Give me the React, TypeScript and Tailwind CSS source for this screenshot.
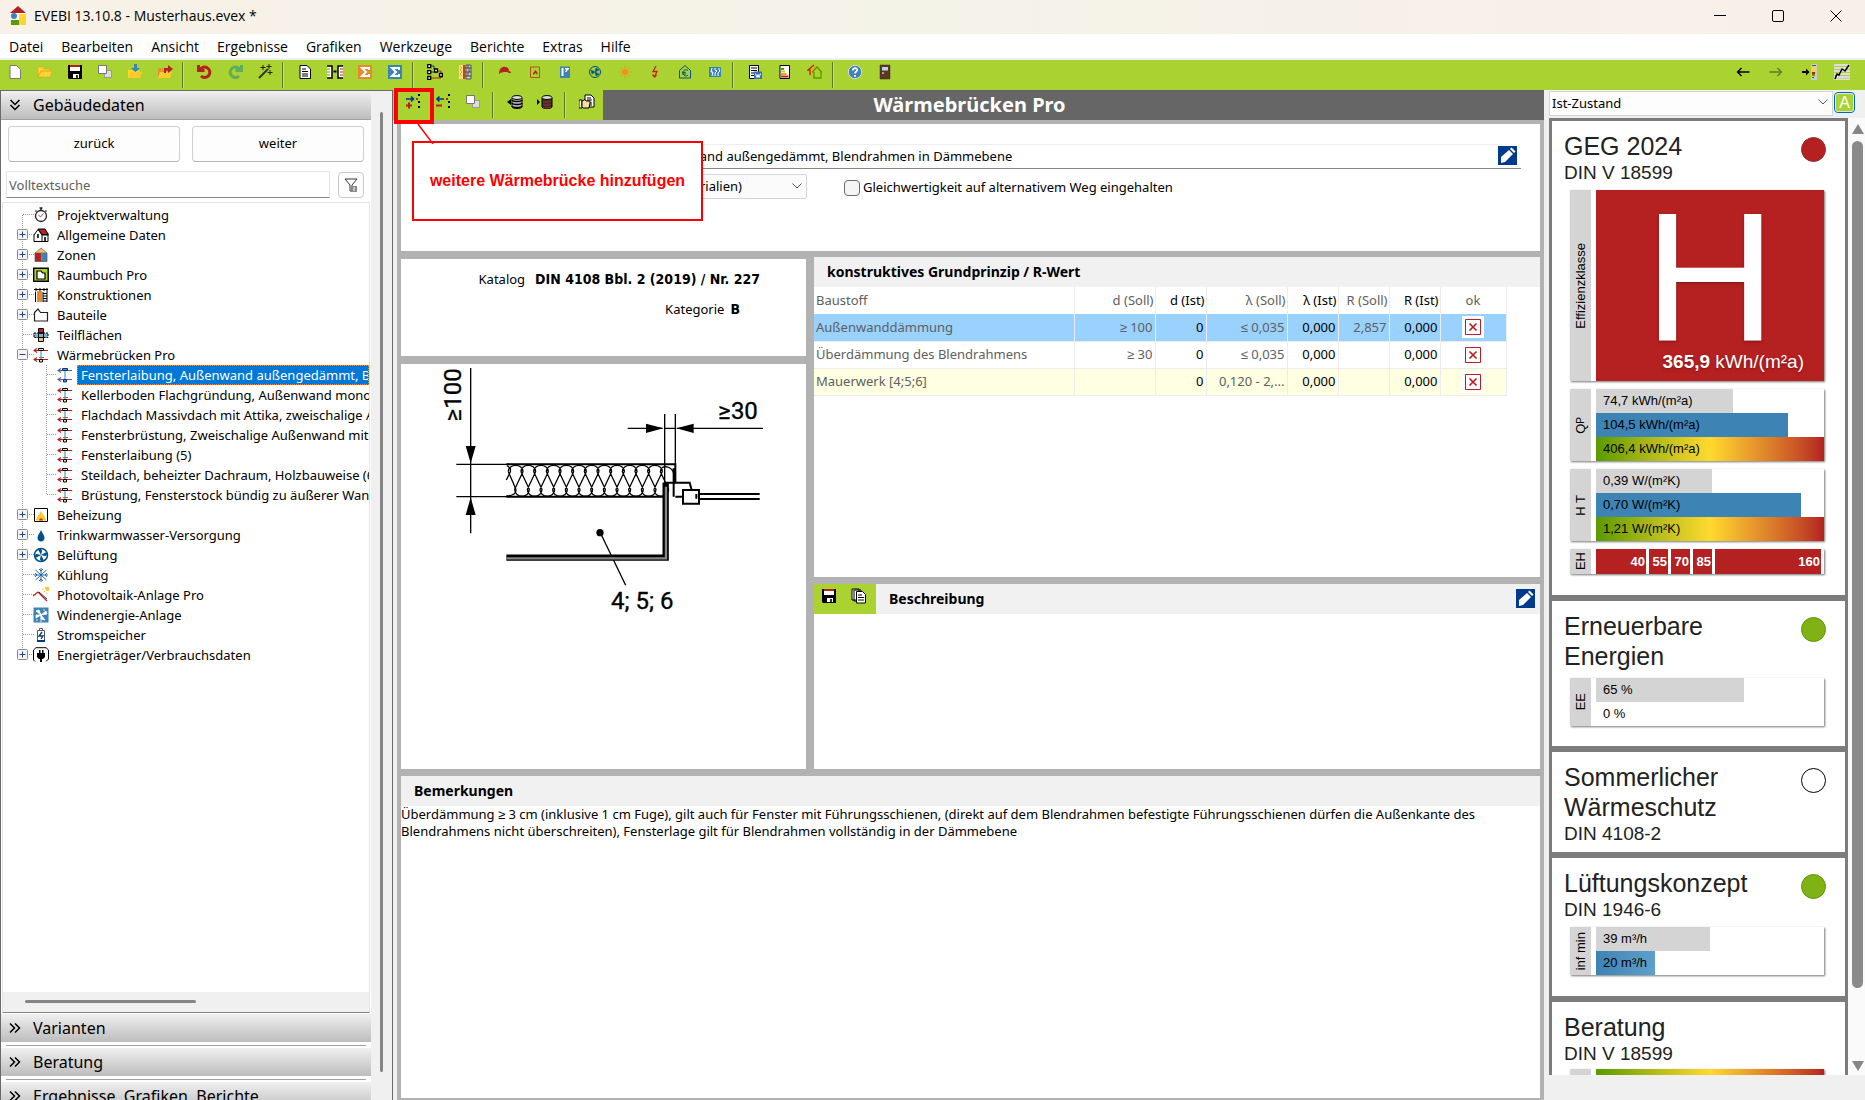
import React from "react";

/* ---------- icons (16 x 16 grid) ---------- */

const icons: Record<string, React.ReactNode> = {
  file: <path d="M3 1.500h6.500l4 4v9H3z" fill="#fff" stroke="#777" />,
  folder: <path d="M1 3h5l1 2h6v2H4l-3 6zM4 7h11l-2 6H1z" fill="#ffd530" stroke="#e0962e" strokeWidth=".5" />,
  save: (
    <>
      <path d="M1 1h14v14H2l-1-1z" fill="#000" />
      <path d="M3 1h10v2H3z" fill="#b52020" />
      <path d="M3 3h10v4H3zM6 10h6v4H6z" fill="#fff" />
      <path d="M9 11h2v3H9z" fill="#333" />
    </>
  ),
  copy: (
    <>
      <path d="M7.500 6.500h7v7h-7z" fill="#ddd" stroke="#999" />
      <path d="M1.500 1.500h8v8h-8z" fill="#fff" stroke="#777" />
    </>
  ),
  open: (
    <>
      <path d="M1 6h4l1 1h7v2l-2 5H1z" fill="#ffd530" />
      <path d="M3 8h12l-2 6H1z" fill="#ffcb2c" />
      <path d="M7 0h3v4h3L8.500 8 4 4h3z" fill="#3d83b4" />
    </>
  ),
  export: (
    <>
      <path d="M1 4h5l1 2h6v3l-2 5H1z" fill="#e0962e" />
      <path d="M3 8h12l-2 6H1z" fill="#ffcb2c" />
      <path d="M7 4h4V1l5 4-5 4V6.500H9V9H7z" fill="#b52020" />
    </>
  ),
  undo: <path d="M3 6a5.200 5.200 0 1 1 1 6M1.500 1v5.500h6" fill="none" stroke="#b52020" strokeWidth="3" />,
  redo: <path d="M13 6a5.200 5.200 0 1 0-1 6M14.500 1v5.500h-6" fill="none" stroke="#5eac5d" strokeWidth="3" />,
  wand: (
    <>
      <path d="M2 14 11 5" stroke="#333" strokeWidth="2" />
      <path d="M6 1v5M3.500 3.500h5M12 0v5M9.500 2.500h5M13 6v5M10.500 8.500h5" stroke="#222" />
    </>
  ),
  doc: (
    <>
      <path d="M3 1.500h7l3.500 3.500v9.500H3z" fill="#fff" stroke="#000" />
      <path d="M5 5h4M5 7.500h6M5 10h6M5 12h6" stroke="#000" />
    </>
  ),
  compare: (
    <>
      <path d="M0 2h5v12H0M16 2h-5v12h5" fill="#fff" stroke="#000" strokeWidth="1.500" />
      <path d="M0 5h3M0 8h3M0 11h3" stroke="#5a9a00" />
      <path d="M13 5h3M13 8h3M13 11h3" stroke="#b52020" />
      <path d="M6.500 7.500h3" stroke="#000" strokeWidth="2" />
    </>
  ),
  sumOrange: (
    <>
      <path d="M1 1h14v14H1z" fill="#e68a2e" />
      <path d="M12 6V4H5l4 4-4 4h7v-2" fill="none" stroke="#fff" strokeWidth="2" />
    </>
  ),
  sumBlue: (
    <>
      <path d="M1 1h14v14H1z" fill="#3d83b4" />
      <path d="M12 6V4H5l4 4-4 4h7v-2" fill="none" stroke="#fff" strokeWidth="2" />
    </>
  ),
  tree: (
    <>
      <path d="M3 2h4v3l3 1M3 8h7" fill="none" stroke="#003a8c" />
      <path d="M4 14h10v-3M10 7h4v3" fill="none" stroke="#b52020" />
      <path d="M.7.700h3v3h-3zM.7 6.700h3v3h-3zM.7 12.500h3v3h-3zM7.500 5h3v3h-3zM12.500 9.500h3v3h-3z" fill="#fff" stroke="#000" strokeWidth="1.300" />
    </>
  ),
  wall: (
    <>
      <path d="M2 1h4v14H2z" fill="#ffd98a" />
      <path d="M7 1v14" stroke="#b52020" strokeWidth="1.500" />
      <path d="M9 1h5v14H9z" fill="#ccc" stroke="#555" />
      <path d="M8 4h6M8 8h6M8 12h6M11 1v3M12 4v4M11 8v4" stroke="#444" />
      <path d="m3 2 2 2-2 2 2 2-2 2 2 2" fill="none" stroke="#c90" strokeWidth=".7" />
    </>
  ),
  cap: <path d="M2 10c0-5 3-8 6-7 3 0 4 2 4 4l2 1c0 2-2 1-4 0-3 0-6 0-8 2z" fill="#b52020" />,
  flame: (
    <>
      <path d="M3.500 3h9v10.500h-9z" fill="none" stroke="#b5521a" />
      <path d="M6 11c-.5-3 2-3 2-5 3 2 3 4 2 5 0-1.500-1-1.500-2-2 0 1-1 1-2 2" fill="#b52020" />
    </>
  ),
  tap: (
    <>
      <path d="M3 2.500h10V14H3z" fill="#3d83b4" />
      <path d="M4.500 4h2v8h-2zM8 4h4v1.500h-1L9.500 8H8l1.200-2.500H8z" fill="#fff" />
    </>
  ),
  fanSmall: (
    <>
      <circle cx="8" cy="8" r="5.500" fill="none" stroke="#00508f" />
      <path d="m8 8-4-2 1 4zM8 8l1-4 3 2zM8 8l4 2-3 2z" fill="#00508f" stroke="#00508f" strokeWidth=".5" />
    </>
  ),
  sun: (
    <>
      <circle cx="8" cy="8" r="3" fill="#ff8c1a" />
      <path d="M8 2v2M8 12v2M2 8h2M12 8h2M3.800 3.800l1.400 1.400M10.800 10.800l1.400 1.400M12.200 3.800l-1.400 1.400M5.200 10.800l-1.400 1.400" stroke="#ff8c1a" />
    </>
  ),
  bolt: <path d="M9 2 6 7.500h4L8 12M5.500 10.500 7.500 13l2-2" fill="none" stroke="#c81e1e" strokeWidth="1.300" />,
  houseEuro: (
    <>
      <path d="M2.500 6.500 8 1.500l5.500 5v7.500h-11z" fill="none" stroke="#00508f" />
      <path d="M11 6.500c-3-2-5 0-5 2.500s3 4 5 2M5 8.300h4M5 10h4" fill="none" stroke="#00508f" />
    </>
  ),
  meter: (
    <>
      <path d="M2 3h12v10H2z" fill="#3d83b4" />
      <path d="M5 4 4 8h2l-1 4M8 4v2l2 1-2 2v3M12 4v2l1 1-2 2v3" fill="none" stroke="#fff" />
    </>
  ),
  docWord: (
    <>
      <path d="M2.500 1.500h9v13h-9z" fill="#fff" stroke="#000" />
      <path d="M4 4h6M4 6.500h6M4 9h4M4 11.500h3" stroke="#000" />
      <path d="M7 7.500h8V15H7z" fill="#3d6fb4" />
      <path d="m8.500 9.500 1.500 4 1-3 1 3 1.500-4" fill="none" stroke="#fff" />
    </>
  ),
  energyDoc: (
    <>
      <path d="M3 1.500h9.500v13H3z" fill="#fff" stroke="#000" />
      <path d="M4 4h3v2H4z" fill="#5a9a00" />
      <path d="M4 6.500h4v2H4z" fill="#c6d420" />
      <path d="M4 9h5.500v2H4z" fill="#f0a020" />
      <path d="M4 11.500h7.500v2H4z" fill="#c81e1e" />
    </>
  ),
  houses: (
    <>
      <path d="M3 11V6H1l6-5" fill="none" stroke="#c81e1e" strokeWidth="1.300" />
      <path d="M5 13V6l5-4" fill="none" stroke="#f0a020" strokeWidth="1.300" />
      <path d="M5 8.500 10 3l5 5.500M7 8v6h7V8" fill="none" stroke="#5a9a00" strokeWidth="1.300" />
    </>
  ),
  help: (
    <>
      <circle cx="8" cy="8" r="6.700" fill="#3d83b4" stroke="#ddd" />
      <path d="M5.800 6.500c0-3 4.500-3 4.500-.5C10.300 7.500 8 7.500 8 9.500M8 11v1.700" fill="none" stroke="#fff" strokeWidth="1.700" />
    </>
  ),
  door: (
    <>
      <path d="M3 1h10v14H3z" fill="#5f3524" stroke="#333" strokeWidth=".5" />
      <path d="M5 3h6v3.500H5z" fill="#b5d6ee" />
      <path d="M5 9h2" stroke="#fff" />
    </>
  ),
  left: <path d="M14.500 8h-12M6.500 4l-4 4 4 4" fill="none" stroke="#000" strokeWidth="1.300" />,
  right: <path d="M1.500 8h12M9.500 4l4 4-4 4" fill="none" stroke="#5f7a2c" strokeWidth="1.300" />,
  dock: (
    <>
      <path d="M10 0h6v16h-6z" fill="#ccc" />
      <path d="M11 3h4v4h-4z" fill="#ffd530" />
      <path d="M11 8h3v2h-3z" fill="#b52020" />
      <path d="M11 10h3v2h-3z" fill="#5a9a00" />
      <path d="M11 1.500h4M11 13.500h2" stroke="#555" />
      <path d="M1 7h4V4.500L8.500 8 5 11.500V9H1z" fill="#000" />
    </>
  ),
  chart: (
    <>
      <path d="M0 1h16M0 4h16M0 7h16M0 10h16M0 13h16M0 15.500h16" stroke="#ddd" strokeWidth="1.800" />
      <path d="m1 15 2-5 2 1 3-6 3 2 4-6" fill="none" stroke="#000" strokeWidth="1.500" />
    </>
  ),
  addRow: (
    <>
      <path d="M1 5h7M6 2.500 8.500 5 6 7.500" fill="none" stroke="#003a8c" strokeWidth="1.700" />
      <path d="M1 11.500h6M4 8.500v6" stroke="#b52020" strokeWidth="2" />
      <path d="M11 4h2v2h-2z" fill="#b52020" />
      <path d="M13 0h2v2h-2zM13 7h2v2h-2zM13 12h2v2h-2z" fill="#000" />
    </>
  ),
  removeRow: (
    <>
      <path d="M9 5H2M4.500 2.500 2 5l2.500 2.500" fill="none" stroke="#003a8c" strokeWidth="1.700" />
      <path d="M1 11.500h6" stroke="#b52020" strokeWidth="2" />
      <path d="M11 4h2v2h-2z" fill="#b52020" />
      <path d="M13 0h2v2h-2zM13 7h2v2h-2zM13 12h2v2h-2z" fill="#000" />
    </>
  ),
  dbOut: (
    <>
      <path d="M5 4v9c1 2 9 2 10 0V4" fill="#bbb" stroke="#000" />
      <path d="M5 6c1 2 9 2 10 0M5 9c1 2 9 2 10 0M5 12c1 2 9 2 10 0" fill="none" stroke="#000" strokeWidth="1.500" />
      <ellipse cx="10" cy="3.500" rx="5" ry="2" fill="#ddd" stroke="#000" />
      <path d="M4 5v6L0 8z" fill="#000" />
    </>
  ),
  dbIn: (
    <>
      <path d="M5 4v9c1 2 9 2 10 0V4" fill="#333" stroke="#000" />
      <path d="M6 7c1 1.500 7 1.500 8 0M6 10c1 1.500 7 1.500 8 0M6 13c1 1.500 7 1.500 8 0" fill="none" stroke="#b52020" />
      <ellipse cx="10" cy="3.500" rx="5" ry="2" fill="#ddd" stroke="#000" />
      <path d="M0 5v6l3-3z" fill="#000" />
    </>
  ),
  hand: (
    <>
      <path d="M6 1h6l3 3v9H6z" fill="#fff" stroke="#000" />
      <path d="M8 4h4M8 6h5M11 9h2M11 11h2" stroke="#000" />
      <path d="M0 6h3v8H0z" fill="#fff" stroke="#000" />
      <path d="m3 7 3-1.500 1 1.500h4v2l-1 5H4l-1-1z" fill="#f5e0a0" stroke="#000" />
    </>
  ),
  pages: (
    <>
      <path d="M1 1h7v11H1zM3 2h7v11H3z" fill="#fff" stroke="#000" />
      <path d="M5.500 3.500h6l3 3v8.500h-9z" fill="#fff" stroke="#000" />
      <path d="M7 7h4M7 9.500h6M7 12h6" stroke="#000" />
    </>
  ),
  clock: (
    <>
      <circle cx="8" cy="9" r="5.500" fill="#fff" stroke="#222" strokeWidth="1.300" />
      <path d="M8 .5V3M6.500 1h3M2.500 3.500l1 1M13.500 3.500l-1 1" stroke="#222" strokeWidth="1.500" />
      <path d="m5.500 8 2 2 3-3.500" fill="none" stroke="#c84030" />
    </>
  ),
  house: (
    <>
      <path d="M1 8 5 2.500 9 8v6.500H1zM9 8h6v6.500H9" fill="#fff" stroke="#000" />
      <path d="M5 2h7l3.500 5.500H9z" fill="#b52020" stroke="#000" />
      <path d="M4 7h2v4H4zM11 10h2v4h-2z" fill="#334" />
    </>
  ),
  zones: (
    <>
      <path d="m2 6 6-5 6 5z" fill="#e6c470" stroke="#765" strokeWidth=".7" />
      <path d="M2 6h6.500v8.500H2z" fill="#b52020" />
      <path d="M8.500 6H14v8.500H8.500z" fill="#3d83b4" />
      <path d="M2 6v8.500h12V6" fill="none" stroke="#555" strokeWidth=".7" />
    </>
  ),
  room: (
    <>
      <path d="M.7 1.200h14.500v13H.7z" fill="#aad331" stroke="#000" strokeWidth="1.400" />
      <path d="M4 4h4l1.500 2H12v6H4z" fill="#fff" stroke="#000" strokeWidth="1.200" />
    </>
  ),
  construction: (
    <>
      <path d="M4 4h5v11H4z" fill="#e68a2e" />
      <path d="M1 2.500h14M2.500 4.500V15M3 1v3M7 1v3M11 1v3M14 1v14M10 5v10M10 6.500h4M10 9h4M10 11.500h4M10 14h4" stroke="#000" />
    </>
  ),
  part: <path d="M1.500 5.500 5 2l2.500 3.500h7v8.500h-13z" fill="#fff" stroke="#222" strokeWidth="1.200" />,
  areas: (
    <>
      <path d="M1 6h14v4.500H1z" fill="#7fb0d0" stroke="#000" strokeDasharray="2 1" />
      <path d="M5.500 1.500h5V6h-5z" fill="#b52020" stroke="#000" />
      <path d="M5.500 10.500h5v4h-5z" fill="#e6c470" stroke="#000" />
      <path d="M5.500 6h5v4.500h-5z" fill="none" stroke="#000" />
    </>
  ),
  bridge: (
    <>
      <path d="M1 3.500h14M1 12.500h14M4 1.500l-3 2 3 2M4 10.500l-3 2 3 2" fill="none" stroke="#b52020" strokeWidth="1.200" />
      <path d="M8 4v8" stroke="#3d83b4" />
      <path d="M5.500 1.500h5v2h-5zM6.500 12.500h3V15h-3z" fill="#f5e0a0" stroke="#000" />
      <path d="M6 10.500h5" stroke="#777" />
    </>
  ),
  bridgeActive: (
    <>
      <path d="M1 3.500h14M1 12.500h14M4 1.500l-3 2 3 2M4 10.500l-3 2 3 2" fill="none" stroke="#5a5fa8" strokeWidth="1.200" />
      <path d="M8 4v8" stroke="#3d83b4" />
      <path d="M5.500 1.500h5v2h-5zM6.500 12.500h3V15h-3z" fill="#3d9ad8" stroke="#0a3a70" />
    </>
  ),
  heating: (
    <>
      <path d="M1.500 1.500h13v13h-13z" fill="#fff" stroke="#000" />
      <path d="M3 13.500c0-4 3-4 5-10 2 6 5 6 5 10z" fill="#ffc52c" />
      <path d="M6 13.500c1-3 3-3 4 0z" fill="#c83018" />
    </>
  ),
  drop: <path d="M8 3c1 3 3.500 5 3.500 8 0 2-1.500 3.500-3.500 3.500S4.500 13 4.500 11C4.500 8 7 6 8 3" fill="#00508f" />,
  fan: (
    <>
      <circle cx="8" cy="8" r="6.500" fill="#fff" stroke="#00508f" strokeWidth="1.500" />
      <path d="M8 8 5 2.500C7 1.500 9 2 9 4zM8 8l5.500-3c1 2 .5 4-1.500 4zM8 8l3 5.500c-2 1-4 .5-4-1.500zM8 8l-5.500 3c-1-2-.5-4 1.500-4z" fill="#00508f" />
    </>
  ),
  snow: <path d="M8 1v14M1 8h14M2.500 3l11 10M13.500 3l-11 10M6 2l2 2 2-2M6 14l2-2 2 2M2 6l2 2-2 2M14 6l-2 2 2 2" fill="none" stroke="#24689c" />,
  solar: (
    <>
      <path d="M0 9 5 5l9 9" fill="none" stroke="#b52020" strokeWidth="1.200" />
      <path d="m6 5 8 7" stroke="#333" />
      <path d="M12 0h4v4h-2l-2-2z" fill="#ffc52c" />
      <path d="M9 2h1.500M11 5l1-1M14 6v1.500" stroke="#ffc52c" />
    </>
  ),
  wind: (
    <>
      <path d="M.5.500h15v15H.5z" fill="#3d83b4" />
      <path d="m8 8-5-4 3-1zM8 8l5-4 1 3zM8 8l4 5-4-1zM8 8l-5 3v-3zM8 8v7M11 2v2M4 12v2" fill="#fff" stroke="#fff" strokeWidth=".8" />
    </>
  ),
  battery: (
    <>
      <path d="M4.500 3.500h7v11h-7zM6.500 1.500h3v2h-3z" fill="#fff" stroke="#556" />
      <path d="M4 13h8v2H4z" fill="#003a8c" />
      <path d="M9 5 6 9h4l-2 3" fill="none" stroke="#003a8c" strokeWidth="1.300" />
    </>
  ),
  plug: (
    <>
      <path d="M2 14.500.5 13V3L3 .7h10L15.500 3v9L13 14.500" fill="none" stroke="#000" />
      <path d="M6 3h1.500v3h1.500V3h1.500v3H12v4l-2 2H9v3H7v-3H6l-2-2V6h2z" fill="#000" />
    </>
  ),
  filter: (
    <>
      <path d="M2 2h12L9 8v6H7V8z" fill="#fff" stroke="#333" />
      <path d="M8 9h6v6H8z" fill="#888" />
      <path d="M10 11h2M10 13h2" stroke="#fff" />
    </>
  ),
};

function Icon({ name, className = "size-4" }: { name: string; className?: string }) {
  return (
    <svg viewBox="0 0 16 16" className={`${className} shrink-0`} aria-hidden="true">
      {icons[name]}
    </svg>
  );
}

function ToolButton({ name, label }: { name: string; label: string }) {
  return (
    <button title={label} aria-label={label} className="flex h-[30px] w-[30px] justify-center pt-1">
      <Icon name={name} />
    </button>
  );
}

function Separator() {
  return <div className="mr-1.5 ml-[2px] h-[26px] w-[2px] self-center border-l border-[#5f7a2c] bg-[#c4e35c]" />;
}

function PenButton({ label }: { label: string }) {
  return (
    <button aria-label={label} className="size-[19px] shrink-0 bg-[#003a8c]">
      <svg viewBox="0 0 19 19" className="size-full">
        <path d="m3 11 8-7 4 4-8 8-4 1zM12 3l1.500-1.500 4 4L16 7z" fill="#fff" />
      </svg>
    </button>
  );
}

function Chevrons({ open }: { open?: boolean }) {
  return (
    <svg viewBox="0 0 12 12" className="size-3 shrink-0" fill="none" stroke="#000" strokeWidth="1.500">
      {open ? <path d="m1.500 1 4.500 4.500L10.500 1M1.500 6 6 10.500 10.500 6" /> : <path d="m1 1.500 4.500 4.500L1 10.500M6 1.500 10.500 6 6 10.500" />}
    </svg>
  );
}

/* ---------- top bars ---------- */

const toolGroups: [string, string][][] = [
  [["file", "Neu"], ["folder", "Öffnen"], ["save", "Speichern"], ["copy", "Kopieren"], ["open", "Import"], ["export", "Export"]],
  [["undo", "Rückgängig"], ["redo", "Wiederholen"], ["wand", "Assistent"]],
  [["doc", "Bericht"], ["compare", "Vergleich"], ["sumOrange", "Summe"], ["sumBlue", "Summe Gebäude"]],
  [["tree", "Struktur"], ["wall", "Bauteile"]],
  [["cap", "Energieberater"], ["flame", "Heizung"], ["tap", "Warmwasser"], ["fanSmall", "Lüftung"], ["sun", "Solar"], ["bolt", "Strom"], ["houseEuro", "Kosten"], ["meter", "Verbrauch"]],
  [["docWord", "Word-Bericht"], ["energyDoc", "Energieausweis"], ["houses", "Varianten"]],
  [["help", "Hilfe"], ["door", "Beenden"]],
];

function TitleBar() {
  return (
    <header className="flex h-[34px] shrink-0 items-center bg-linear-to-r from-[#f8f1e8] via-[#f4f3e8] to-[#f9efe9] pb-[3px] pl-[10px] font-['Open_Sans','Noto_Sans',sans-serif] text-sm">
      <svg viewBox="0 0 16 20" className="h-5 w-4">
        <path d="M0 7 8 0l8 7z" fill="#b52020" />
        <path d="M3 7h12v12H3z" fill="#fff" />
        <circle cx="4" cy="10" r="3" fill="#3d83b4" />
        <path d="M9 8h7v11H9z" fill="#ffd530" />
        <path d="M1 14h8v5H1z" fill="#5a9a00" />
      </svg>
      <h1 className="ml-2 flex-1">EVEBI 13.10.8 - Musterhaus.evex *</h1>
      <div className="flex">
        <button aria-label="Minimieren" className="flex w-[58px] justify-center"><svg viewBox="0 0 12 12" className="size-3"><path d="M0 5.500h12" stroke="#000" /></svg></button>
        <button aria-label="Maximieren" className="flex w-[58px] justify-center"><svg viewBox="0 0 12 12" className="size-3"><rect x=".5" y=".5" width="11" height="11" rx="1.500" fill="none" stroke="#000" /></svg></button>
        <button aria-label="Schließen" className="flex w-[58px] justify-center"><svg viewBox="0 0 12 12" className="size-3"><path d="m.5.500 11 11m0-11-11 11" stroke="#000" /></svg></button>
      </div>
    </header>
  );
}

const menu = ["Datei", "Bearbeiten", "Ansicht", "Ergebnisse", "Grafiken", "Werkzeuge", "Berichte", "Extras", "Hilfe"];

function MenuBar() {
  return (
    <nav className="flex h-[26px] shrink-0 items-start gap-[18px] border-b-2 border-[#f0f0f0] bg-white pt-[3px] pl-[9px] font-['Open_Sans','Noto_Sans',sans-serif] text-sm">
      {menu.map((m) => (
        <button key={m}>{m}</button>
      ))}
    </nav>
  );
}

function ToolBar() {
  return (
    <div className="flex h-[30px] shrink-0 bg-[#aad331]">
      {toolGroups.map((group, i) => (
        <React.Fragment key={i}>
          {i > 0 && <Separator />}
          {group.map(([name, label]) => (
            <ToolButton key={name} name={name} label={label} />
          ))}
        </React.Fragment>
      ))}
      <div className="ml-auto flex gap-[3px] pr-2">
        <ToolButton name="left" label="Zurück" />
        <ToolButton name="right" label="Vor" />
        <ToolButton name="dock" label="Andocken" />
        <ToolButton name="chart" label="Diagramm" />
      </div>
    </div>
  );
}

/* ---------- navigation ---------- */

type Node = { icon: string; text: string; state?: "open" | "closed"; children?: string[] };

const nodes: Node[] = [
  { icon: "clock", text: "Projektverwaltung" },
  { icon: "house", text: "Allgemeine Daten", state: "closed" },
  { icon: "zones", text: "Zonen", state: "closed" },
  { icon: "room", text: "Raumbuch Pro", state: "closed" },
  { icon: "construction", text: "Konstruktionen", state: "closed" },
  { icon: "part", text: "Bauteile", state: "closed" },
  { icon: "areas", text: "Teilflächen" },
  {
    icon: "bridge",
    text: "Wärmebrücken Pro",
    state: "open",
    children: [
      "Fensterlaibung, Außenwand außengedämmt, Blendrahmen",
      "Kellerboden Flachgründung, Außenwand monolithisch",
      "Flachdach Massivdach mit Attika, zweischalige Außenwand",
      "Fensterbrüstung, Zweischalige Außenwand mit Wärmedämmung",
      "Fensterlaibung (5)",
      "Steildach, beheizter Dachraum, Holzbauweise (6)",
      "Brüstung, Fensterstock bündig zu äußerer Wand",
    ],
  },
  { icon: "heating", text: "Beheizung", state: "closed" },
  { icon: "drop", text: "Trinkwarmwasser-Versorgung", state: "closed" },
  { icon: "fan", text: "Belüftung", state: "closed" },
  { icon: "snow", text: "Kühlung" },
  { icon: "solar", text: "Photovoltaik-Anlage Pro" },
  { icon: "wind", text: "Windenergie-Anlage" },
  { icon: "battery", text: "Stromspeicher" },
  { icon: "plug", text: "Energieträger/Verbrauchsdaten", state: "closed" },
];

function Guide({ node, first, last }: { node: Node; first: boolean; last: boolean }) {
  return (
    <svg viewBox="0 0 18 20" className="h-5 w-[18px] shrink-0" fill="none">
      <path d={`M5.500 ${first ? 10 : 0}V${last ? 10 : 20}M6 9.500h11`} stroke="#999" strokeDasharray="1 1" />
      {node.state && (
        <>
          <rect x=".5" y="4.500" width="10" height="10" rx="1" fill="#f4f4f4" stroke="#8a8a8a" />
          <path d={node.state === "closed" ? "M2.500 9.500h6M5.500 6.500v6" : "M2.500 9.500h6"} stroke="#24449a" />
        </>
      )}
    </svg>
  );
}

function Tree() {
  return (
    <ul className="pt-[2px] pl-[14px] text-[13px] leading-5 whitespace-nowrap">
      {nodes.map((node, i) => (
        <li key={node.text}>
          <div className="flex items-center">
            <Guide node={node} first={i === 0} last={i === nodes.length - 1} />
            <Icon name={node.icon} className="mr-1.5 ml-[-2px] size-4" />
            <a href="#" className="pl-0.5">{node.text}</a>
          </div>
          {node.children && (
            <ul>
              {node.children.map((child, c) => (
                <li key={child} className="flex items-center">
                  <svg viewBox="0 0 40 20" className="h-5 w-10 shrink-0" fill="none">
                    <path d={`M5.500 0V20M29.500 0V${c === 6 ? 10 : 20}M30 9.500h10`} stroke="#999" strokeDasharray="1 1" />
                  </svg>
                  <Icon name={c === 0 ? "bridgeActive" : "bridge"} />
                  <a
                    href="#"
                    className={
                      c === 0
                        ? "ml-1 flex-1 overflow-hidden border border-dotted border-[#ff8728] bg-[#0078d7] pl-[3px] leading-[18px] text-white"
                        : "ml-1 flex-1 overflow-hidden pl-1"
                    }
                  >
                    {child}
                  </a>
                </li>
              ))}
            </ul>
          )}
        </li>
      ))}
    </ul>
  );
}

function SectionHeader({ text, open }: { text: string; open?: boolean }) {
  return (
    <button className="flex h-7 w-full shrink-0 items-center gap-3 bg-linear-to-b from-[#f0f0f0] to-[#bdbdbd] pl-2 text-base">
      <Chevrons open={open} />
      {text}
    </button>
  );
}

function Sidebar() {
  return (
    <aside className="flex w-[393px] shrink-0 border-t border-r border-l border-[#6a6a6a] bg-[#f0f0f0]">
      <div className="flex w-[370px] flex-col bg-white">
        <SectionHeader text="Gebäudedaten" open />
        <div className="flex shrink-0 gap-3 border-t border-[#a0a0a0] px-[7px] pt-1.5 text-[13px]">
          <button className="h-9 flex-1 rounded border border-[#d0d0d0] border-b-[#b5b5b5] bg-[#fdfdfd]">zurück</button>
          <button className="h-9 flex-1 rounded border border-[#d0d0d0] border-b-[#b5b5b5] bg-[#fdfdfd]">weiter</button>
        </div>
        <div className="flex shrink-0 items-center gap-2 pt-[9px] pr-[7px] pb-1 pl-[5px]">
          <input
            aria-label="Volltextsuche"
            placeholder="Volltextsuche"
            className="h-[27px] min-w-0 flex-1 border border-[#e5e5e5] border-b-[#868686] px-0.5 text-[13px] placeholder:text-[#606060]"
          />
          <button aria-label="Filter" className="flex size-[26px] items-center justify-center rounded border border-[#c8c8c8] bg-[#fdfdfd]">
            <Icon name="filter" />
          </button>
        </div>
        <div className="mx-px flex min-h-0 flex-1 flex-col overflow-hidden border border-[#e3e3e3] border-b-[#868686]">
          <div className="min-h-0 flex-1 overflow-hidden">
            <Tree />
          </div>
          <div className="h-5 shrink-0 bg-[#f0f0f0] pt-2 pl-[22px]">
            <div className="h-[3px] w-[171px] rounded-full bg-[#858585]" />
          </div>
        </div>
        <div className="flex h-[87px] shrink-0 flex-col overflow-hidden pt-px">
          <SectionHeader text="Varianten" />
          <div className="mx-[5px] mt-[3px] mb-0.5 shrink-0 border-b border-[#a0a0a0]" />
          <SectionHeader text="Beratung" />
          <div className="mx-[5px] mt-[3px] mb-0.5 shrink-0 border-b border-[#a0a0a0]" />
          <SectionHeader text="Ergebnisse, Grafiken, Berichte" />
        </div>
      </div>
      <div className="flex flex-1 justify-center pt-[21px] pb-7">
        <div className="w-[3px] rounded-full bg-[#858585]" />
      </div>
    </aside>
  );
}

/* ---------- construction detail drawing ---------- */

function DetailDrawing() {
  const loops = Array.from({ length: 12 }, (_, i) => 362 + i * 38);
  const insulation = loops
    .map((x) => `C${x - 22} 640 ${x + 22} 640 ${x + 22} 665L${x - 3} 718C${x - 3} 745 ${x + 41} 745 ${x + 41} 718L${x + 16} 665`)
    .join("");
  return (
    <svg viewBox="18 342 1215 798" className="h-[266px] w-[405px]" fill="none" stroke="#000">
      <g strokeWidth="4">
        <path d="M227 354V850M184 643h160M184 740h160M698 535h105M808 535h33M845 535h259M809 492v210M841 492v150M616 848l76 158" />
        <path d={`M340 665${insulation}C796 640 836 650 836 672`} />
        <path d="M334 690 346 665c2-8-2-14-10-18M334 738c20 0 32-8 28-22l-22-51" />
      </g>
      <path d="M334 643h507v55M334 740h472M836 655v85M841 740h24M806 698h78l6 22M864 720h48v41h-48zM912 732h182M912 747h182M904 732v14" strokeWidth="6" />
      <path d="M812 698v225H334" stroke="#000" strokeWidth="19" />
      <path d="M813 710v215H334" stroke="#888" strokeWidth="7" />
      <g fill="#000" stroke="none">
        <path d="m227 640-15-52h30zM227 742l-15 53h30zM805 535l-52-14v28zM844 535l52-14v28z" />
        <circle cx="615" cy="848" r="11" />
        <g className="font-['Liberation_Sans_Narrow','Roboto',sans-serif] text-[72px]" stroke="#000" strokeWidth="1">
          <text x="970" y="508">≥30</text>
          <text x="648" y="1076">4; 5; 6</text>
          <text transform="translate(199 514) rotate(-90)">≥100</text>
        </g>
      </g>
    </svg>
  );
}

/* ---------- main area ---------- */

const rows = [
  { name: "Außenwanddämmung", cells: ["≥ 100", "0", "≤ 0,035", "0,000", "2,857", "0,000"], className: "bg-[#99d1ff]" },
  { name: "Überdämmung des Blendrahmens", cells: ["≥ 30", "0", "≤ 0,035", "0,000", "", "0,000"], className: "bg-white" },
  { name: "Mauerwerk [4;5;6]", cells: ["", "0", "0,120 - 2,...", "0,000", "", "0,000"], className: "bg-[#ffffe1]" },
];

const columns = ["d (Soll)", "d (Ist)", "λ (Soll)", "λ (Ist)", "R (Soll)", "R (Ist)"];

function LayerTable() {
  return (
    <table className="w-[692px] table-fixed border-collapse text-right text-[13px] whitespace-nowrap">
      <colgroup>
        <col className="w-[260px]" />
        <col className="w-[81px]" />
        <col className="w-[51px]" />
        <col className="w-[81px]" />
        <col className="w-[51px]" />
        <col className="w-[51px]" />
        <col className="w-[51px]" />
        <col className="w-[66px]" />
      </colgroup>
      <thead>
        <tr className="h-[27px] text-[#606060]">
          <th className="border-r border-[#ececec] pl-0.5 text-left font-normal">Baustoff</th>
          {columns.map((c, i) => (
            <th key={c} className={i % 2 ? "border-r border-[#ececec] pr-px font-normal text-black" : "border-r border-[#ececec] pr-px font-normal"}>
              {c}
            </th>
          ))}
          <th className="border-r border-[#ececec] text-center font-normal">ok</th>
        </tr>
      </thead>
      <tbody>
        {rows.map((r) => (
          <tr key={r.name} className={`h-[27px] border-b border-[#ececec] text-[#606060] ${r.className}`}>
            <td className="border-r border-[#ececec] pl-0.5 text-left">{r.name}</td>
            {r.cells.map((c, i) => (
              <td key={i} className={i % 2 ? "border-r border-[#ececec] pr-0.5 text-black" : "border-r border-[#ececec] pr-0.5"}>
                {c}
              </td>
            ))}
            <td className="border-r border-[#ececec]">
              <svg viewBox="0 0 22 22" className="mx-auto size-[22px]" fill="none" stroke="#b52020">
                <path d="M0 0h22v22H0z" fill="#fff" stroke="none" />
                <path d="M3.500 3.500h15v15h-15z" />
                <path d="m7.500 7.500 7 7m0-7-7 7" strokeWidth="1.700" />
              </svg>
            </td>
          </tr>
        ))}
      </tbody>
    </table>
  );
}

function PanelTitle({ children }: { children: React.ReactNode }) {
  return <h3 className="flex h-[30px] items-center bg-[#f1f1f1] pl-[13px] text-sm font-bold">{children}</h3>;
}

function Callout() {
  return (
    <div className="absolute top-[-2px] left-px">
      <div className="h-9 w-10 border-4 border-[#ff0000]" />
      <svg viewBox="0 0 20 20" className="ml-[23px] block size-5">
        <path d="M1 0 16 20" stroke="#ff0000" strokeWidth="1.500" />
      </svg>
      <div className="mt-[-3px] ml-[18px] flex h-[80px] w-[291px] items-center justify-center border-2 border-[#ff0000] bg-white font-['Liberation_Sans',sans-serif] text-base font-bold text-[#ff0000]">
        weitere Wärmebrücke hinzufügen
      </div>
    </div>
  );
}

function Main() {
  return (
    <main className="relative flex min-w-0 flex-1 flex-col bg-[#f0f0f0]">
      <div className="flex h-[30px] shrink-0 bg-[#666]">
        <div className="flex w-[210px] bg-[#aad331] pl-[5px]">
          <ToolButton name="addRow" label="weitere Wärmebrücke hinzufügen" />
          <ToolButton name="removeRow" label="Wärmebrücke löschen" />
          <ToolButton name="copy" label="Kopieren" />
          <div className="w-0.5" />
          <Separator />
          <ToolButton name="dbOut" label="Aus Datenbank" />
          <ToolButton name="dbIn" label="In Datenbank" />
          <div className="w-0.5" />
          <Separator />
          <ToolButton name="hand" label="Übernehmen" />
        </div>
        <h2 className="flex-1 pr-[208px] text-center text-xl leading-[30px] font-bold text-white">Wärmebrücken Pro</h2>
      </div>

      <div className="ml-1 flex min-h-0 flex-1 flex-col bg-[#b2b2b2] px-1 pt-1 pb-0.5 text-[13px]">
        <section className="h-[127px] shrink-0 bg-white pt-[19px] pr-[19px]">
          <div className="ml-[100px] flex h-[26px] items-center border-b border-[#868686] pr-1">
            <input
              aria-label="Bezeichnung"
              defaultValue="Fensterlaibung, Außenwand außengedämmt, Blendrahmen in Dämmebene"
              className="h-6 min-w-0 flex-1 border-t border-[#eee] pl-[50px]"
            />
            <PenButton label="Bezeichnung bearbeiten" />
          </div>
          <div className="mt-[5px] flex h-[25px] items-center">
            <div className="relative ml-[180px] h-full w-[226px]">
              <select aria-label="Nachweis" className="h-full w-full appearance-none rounded-xs border border-[#d5d5d5] bg-[#fbfbfb] pr-[64px] text-right">
                <option>gleichwertig (Materialien)</option>
              </select>
              <svg viewBox="0 0 10 6" className="pointer-events-none absolute top-[9px] right-[5px] h-1.5 w-2.5">
                <path d="m.5.500 4.500 4.500L9.500.500" fill="none" stroke="#555" />
              </svg>
            </div>
            <label className="ml-[37px] flex items-center gap-[3px] pt-[3px]">
              <input type="checkbox" className="size-4 appearance-none rounded border border-[#6a6a6a] bg-[#f5f5f5]" />
              Gleichwertigkeit auf alternativem Weg eingehalten
            </label>
          </div>
        </section>

        <div className="mt-1.5 flex shrink-0 gap-2">
          <div className="flex w-[405px] flex-col gap-2 pt-0.5">
            <section className="h-[97px] bg-white pt-[10px]">
              <p className="flex justify-end gap-2.5 pr-[46px] leading-5">
                Katalog <b className="font-['DejaVu_Sans_Condensed','DejaVu_Sans',sans-serif] text-sm leading-5">DIN 4108 Bbl. 2 (2019) / Nr. 227</b>
              </p>
              <p className="mt-2.5 flex justify-end gap-1.5 pr-[66px] leading-5">
                Kategorie <b className="font-['DejaVu_Sans_Condensed','DejaVu_Sans',sans-serif] text-sm leading-5">B</b>
              </p>
            </section>
            <section className="flex-1 bg-white">
              <DetailDrawing />
            </section>
          </div>
          <div className="flex min-w-0 flex-1 flex-col gap-[7px]">
            <section className="h-[320px] bg-white">
              <PanelTitle>konstruktives Grundprinzip / R-Wert</PanelTitle>
              <LayerTable />
            </section>
            <section className="h-[185px] bg-white">
              <div className="flex bg-[#f1f1f1]">
                <div className="flex bg-[#aad331] pr-0.5">
                  <ToolButton name="save" label="Beschreibung speichern" />
                  <ToolButton name="pages" label="Beschreibung kopieren" />
                </div>
                <div className="flex-1">
                  <PanelTitle>Beschreibung</PanelTitle>
                </div>
                <div className="pt-[5px] pr-[5px]">
                  <PenButton label="Beschreibung bearbeiten" />
                </div>
              </div>
            </section>
          </div>
        </div>

        <section className="mt-[7px] min-h-0 flex-1 bg-white">
          <PanelTitle>Bemerkungen</PanelTitle>
          <p className="max-w-[1090px] leading-[17px]">
            Überdämmung ≥ 3 cm (inklusive 1 cm Fuge), gilt auch für Fenster mit Führungsschienen, (direkt auf dem Blendrahmen befestigte Führungsschienen dürfen die Außenkante des Blendrahmens nicht überschreiten), Fensterlage gilt für Blendrahmen vollständig in der Dämmebene
          </p>
        </section>
      </div>
      <Callout />
    </main>
  );
}

/* ---------- results ---------- */

const scale = "bg-linear-to-r from-[#5a9a00] via-[#ffd92e] to-[#b52020]";

function Meter({ label, children }: { label: React.ReactNode; children?: React.ReactNode }) {
  return (
    <div className="ml-1.5 flex w-[254px] shadow-[1px_1px_2px_#777]">
      <div className="flex w-[21px] items-center justify-center overflow-hidden bg-[#d4d4d4]">
        <span className="rotate-180 text-[13px] whitespace-nowrap [writing-mode:vertical-rl]">{label}</span>
      </div>
      <div className="ml-[5px] min-w-0 flex-1">{children}</div>
    </div>
  );
}

function Bar({ text, width, className }: { text: string; width: number; className: string }) {
  return (
    <div className={`h-6 pl-[7px] text-[13px] leading-6 whitespace-nowrap ${className}`} style={{ width: `${width}%` }}>
      {text}
    </div>
  );
}

function Card({ title, sub, light, className = "pb-[21px]", children }: { title: string; sub?: string; light?: string; className?: string; children?: React.ReactNode }) {
  return (
    <section className={`shrink-0 bg-white pt-2.5 pl-3 ${className}`}>
      <div className="flex items-start justify-between pr-[19px]">
        <div className="text-[#222]">
          <h3 className="max-w-[200px] text-[25px] leading-[30px]">{title}</h3>
          {sub && <p className="mt-px text-[19px] leading-[22px]">{sub}</p>}
        </div>
        {light && <div className={`mt-1.5 size-[25px] shrink-0 rounded-full border ${light}`} />}
      </div>
      {children}
    </section>
  );
}

const levels = [
  { text: "40", className: "w-[50px]" },
  { text: "55", className: "w-[19px]" },
  { text: "70", className: "w-[19px]" },
  { text: "85", className: "w-[19px]" },
  { text: "160", className: "w-[106px]" },
];

function Results() {
  return (
    <aside className="flex w-[321px] shrink-0 flex-col bg-[#f0f0f0] pl-[5px]">
      <div className="flex h-7 shrink-0 items-start gap-px">
        <div className="relative h-[25px] w-[284px]">
          <select aria-label="Variante" className="h-full w-full appearance-none border border-[#d5d5d5] bg-[#fdfdfd] pl-0.5 text-[13px]">
            <option>Ist-Zustand</option>
          </select>
          <svg viewBox="0 0 10 6" className="pointer-events-none absolute top-[9px] right-[5px] h-1.5 w-2.5">
            <path d="m.5.500 4.500 4.500L9.500.500" fill="none" stroke="#555" />
          </svg>
        </div>
        <button className="mt-0.5 size-[21px] rounded border border-[#0067c0] bg-[#aad331] font-['Liberation_Sans',sans-serif] text-base leading-[17px] text-white outline-1 -outline-offset-2 outline-[#d5e8f5]">
          A
        </button>
      </div>
      <div className="mb-[25px] flex min-h-0 flex-1">
        <div className="flex w-[299px] flex-col gap-1.5 overflow-hidden border-x-[3px] border-t-[3px] border-[#7c7c7c] bg-[#7c7c7c] font-['Liberation_Sans',sans-serif]">
          <Card title="GEG 2024" sub="DIN V 18599" light="border-[#8a3030] bg-[#b52020]">
            <div className="mt-1.5 flex flex-col gap-2">
              <Meter label="Effizienzklasse">
                <div className="flex h-[191px] flex-col bg-[#b52020] text-white text-shadow-md">
                  <div className="h-[161px] text-center text-[183px] leading-[175px]">H</div>
                  <p className="pr-5 text-right text-[19px] leading-[22px]">
                    <b>365,9</b> kWh/(m²a)
                  </p>
                </div>
              </Meter>
              <Meter label={<>Q<span className="ml-1 text-[10px]">P</span></>}>
                <Bar text="74,7 kWh/(m²a)" width={60} className="bg-[#d4d4d4]" />
                <Bar text="104,5 kWh/(m²a)" width={84} className="bg-[#3d83b4]" />
                <Bar text="406,4 kWh/(m²a)" width={100} className={scale} />
              </Meter>
              <Meter label="H T">
                <Bar text="0,39 W/(m²K)" width={51} className="bg-[#d4d4d4]" />
                <Bar text="0,70 W/(m²K)" width={90} className="bg-[#3d83b4]" />
                <Bar text="1,21 W/(m²K)" width={100} className={scale} />
              </Meter>
              <Meter label="EH">
                <div className="flex h-[25px] gap-[3px] text-right text-[13px] leading-[25px] font-bold text-white">
                  {levels.map((l) => (
                    <div key={l.text} className={`bg-[#b52020] pr-px ${l.className}`}>{l.text}</div>
                  ))}
                </div>
              </Meter>
            </div>
          </Card>
          <Card title="Erneuerbare Energien" light="border-[#5a9a00] bg-[#80b216]" className="pb-[20px]">
            <div className="mt-[7px]">
              <Meter label="EE">
                <Bar text="65 %" width={65} className="bg-[#d4d4d4]" />
                <Bar text="0 %" width={15} className="bg-white" />
              </Meter>
            </div>
          </Card>
          <Card title="Sommerlicher Wärmeschutz" sub="DIN 4108-2" light="border-black bg-white" className="pb-[7px]" />
          <Card title="Lüftungskonzept" sub="DIN 1946-6" light="border-[#5a9a00] bg-[#80b216]">
            <div className="mt-1.5">
              <Meter label="inf min">
                <Bar text="39 m³/h" width={50} className="bg-[#d4d4d4]" />
                <Bar text="20 m³/h" width={26} className="bg-linear-to-r from-[#3d83b4] to-[#5f9fcb]" />
              </Meter>
            </div>
          </Card>
          <Card title="Beratung" sub="DIN V 18599">
            <div className="mt-1">
              <Meter label="Pf">
                <Bar text="" width={100} className={scale} />
              </Meter>
            </div>
          </Card>
        </div>
        <div className="flex flex-1 flex-col items-center bg-[#fafafa] pt-1.5 pb-1 pl-0.5">
          <svg viewBox="0 0 12 10" className="h-2.5 w-3"><path d="m6 0 6 10H0z" fill="#858585" /></svg>
          <div className="mt-[7px] mb-[73px] w-[11px] flex-1 rounded-full bg-[#8a8a8a]" />
          <svg viewBox="0 0 12 10" className="h-2.5 w-3"><path d="M0 0h12L6 10z" fill="#858585" /></svg>
        </div>
      </div>
    </aside>
  );
}

export default function App() {
  return (
    <div className="flex h-screen flex-col overflow-hidden bg-white font-['Noto_Sans',sans-serif] text-black">
      <TitleBar />
      <MenuBar />
      <ToolBar />
      <div className="flex min-h-0 flex-1">
        <Sidebar />
        <Main />
        <Results />
      </div>
    </div>
  );
}
